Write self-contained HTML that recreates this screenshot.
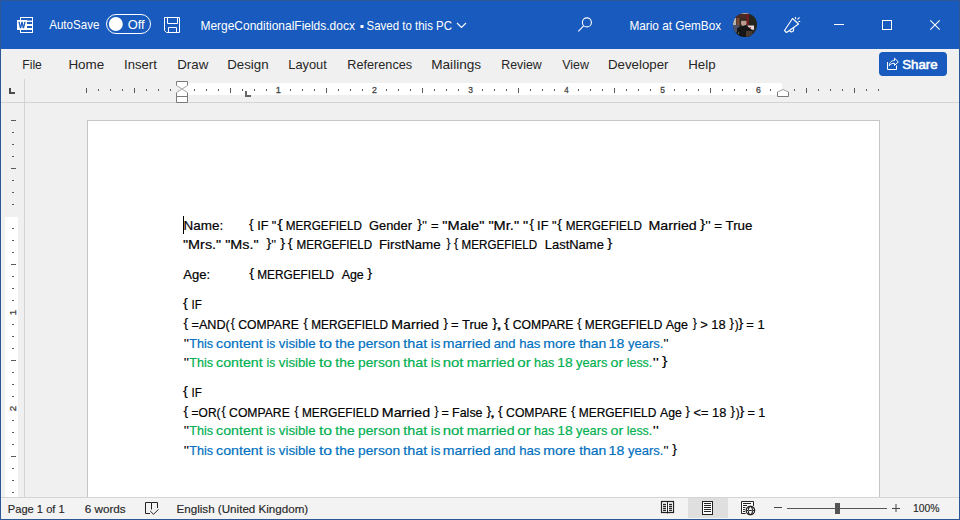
<!DOCTYPE html>
<html><head><meta charset="utf-8">
<style>
*{margin:0;padding:0}
html,body{width:960px;height:520px;overflow:hidden;background:#f0f0f0}
svg{position:absolute;left:0;top:0;display:block}
text{font-family:"Liberation Sans",sans-serif;white-space:pre}
</style></head><body>
<svg width="960" height="520" viewBox="0 0 960 520" xml:space="preserve">
<!-- backgrounds -->
<rect x="0" y="0" width="960" height="520" fill="#f0f0f0"/>
<rect x="0" y="0" width="960" height="49" fill="#185abd"/>
<!-- ruler -->
<rect x="24" y="79" width="1" height="418" fill="#d4d4d4"/>
<rect x="1" y="102" width="958" height="1" fill="#d4d4d4"/>
<rect x="183" y="83" width="599" height="12" fill="#ffffff"/>
<rect x="5" y="217" width="13" height="280" fill="#ffffff"/>
<!-- page -->
<rect x="87.5" y="120.5" width="792" height="400" fill="#ffffff" stroke="#c6c6c6" stroke-width="1"/>
<!-- RULER -->
<rect x="86" y="88" width="1" height="5" fill="#5a5a5a"/>
<rect x="98" y="89" width="1" height="2" fill="#5a5a5a"/>
<rect x="110" y="89" width="1" height="2" fill="#5a5a5a"/>
<rect x="122" y="89" width="1" height="2" fill="#5a5a5a"/>
<rect x="134" y="88" width="1" height="5" fill="#5a5a5a"/>
<rect x="146" y="89" width="1" height="2" fill="#5a5a5a"/>
<rect x="158" y="89" width="1" height="2" fill="#5a5a5a"/>
<rect x="170" y="89" width="1" height="2" fill="#5a5a5a"/>
<rect x="194" y="89" width="1" height="2" fill="#5a5a5a"/>
<rect x="206" y="89" width="1" height="2" fill="#5a5a5a"/>
<rect x="218" y="89" width="1" height="2" fill="#5a5a5a"/>
<rect x="230" y="88" width="1" height="5" fill="#5a5a5a"/>
<rect x="242" y="89" width="1" height="2" fill="#5a5a5a"/>
<rect x="254" y="89" width="1" height="2" fill="#5a5a5a"/>
<rect x="266" y="89" width="1" height="2" fill="#5a5a5a"/>
<rect x="290" y="89" width="1" height="2" fill="#5a5a5a"/>
<rect x="302" y="89" width="1" height="2" fill="#5a5a5a"/>
<rect x="314" y="89" width="1" height="2" fill="#5a5a5a"/>
<rect x="326" y="88" width="1" height="5" fill="#5a5a5a"/>
<rect x="338" y="89" width="1" height="2" fill="#5a5a5a"/>
<rect x="350" y="89" width="1" height="2" fill="#5a5a5a"/>
<rect x="362" y="89" width="1" height="2" fill="#5a5a5a"/>
<rect x="386" y="89" width="1" height="2" fill="#5a5a5a"/>
<rect x="398" y="89" width="1" height="2" fill="#5a5a5a"/>
<rect x="410" y="89" width="1" height="2" fill="#5a5a5a"/>
<rect x="422" y="88" width="1" height="5" fill="#5a5a5a"/>
<rect x="434" y="89" width="1" height="2" fill="#5a5a5a"/>
<rect x="446" y="89" width="1" height="2" fill="#5a5a5a"/>
<rect x="458" y="89" width="1" height="2" fill="#5a5a5a"/>
<rect x="482" y="89" width="1" height="2" fill="#5a5a5a"/>
<rect x="494" y="89" width="1" height="2" fill="#5a5a5a"/>
<rect x="506" y="89" width="1" height="2" fill="#5a5a5a"/>
<rect x="518" y="88" width="1" height="5" fill="#5a5a5a"/>
<rect x="530" y="89" width="1" height="2" fill="#5a5a5a"/>
<rect x="542" y="89" width="1" height="2" fill="#5a5a5a"/>
<rect x="554" y="89" width="1" height="2" fill="#5a5a5a"/>
<rect x="578" y="89" width="1" height="2" fill="#5a5a5a"/>
<rect x="590" y="89" width="1" height="2" fill="#5a5a5a"/>
<rect x="602" y="89" width="1" height="2" fill="#5a5a5a"/>
<rect x="614" y="88" width="1" height="5" fill="#5a5a5a"/>
<rect x="626" y="89" width="1" height="2" fill="#5a5a5a"/>
<rect x="638" y="89" width="1" height="2" fill="#5a5a5a"/>
<rect x="650" y="89" width="1" height="2" fill="#5a5a5a"/>
<rect x="674" y="89" width="1" height="2" fill="#5a5a5a"/>
<rect x="686" y="89" width="1" height="2" fill="#5a5a5a"/>
<rect x="698" y="89" width="1" height="2" fill="#5a5a5a"/>
<rect x="710" y="88" width="1" height="5" fill="#5a5a5a"/>
<rect x="722" y="89" width="1" height="2" fill="#5a5a5a"/>
<rect x="734" y="89" width="1" height="2" fill="#5a5a5a"/>
<rect x="746" y="89" width="1" height="2" fill="#5a5a5a"/>
<rect x="770" y="89" width="1" height="2" fill="#5a5a5a"/>
<rect x="794" y="89" width="1" height="2" fill="#5a5a5a"/>
<rect x="806" y="88" width="1" height="5" fill="#5a5a5a"/>
<rect x="818" y="89" width="1" height="2" fill="#5a5a5a"/>
<rect x="830" y="89" width="1" height="2" fill="#5a5a5a"/>
<rect x="842" y="89" width="1" height="2" fill="#5a5a5a"/>
<rect x="854" y="88" width="1" height="5" fill="#5a5a5a"/>
<rect x="866" y="89" width="1" height="2" fill="#5a5a5a"/>
<rect x="878" y="89" width="1" height="2" fill="#5a5a5a"/>
<rect x="11" y="120" width="5" height="1" fill="#5a5a5a"/>
<rect x="12" y="132" width="2" height="1" fill="#5a5a5a"/>
<rect x="12" y="144" width="2" height="1" fill="#5a5a5a"/>
<rect x="12" y="156" width="2" height="1" fill="#5a5a5a"/>
<rect x="11" y="168" width="5" height="1" fill="#5a5a5a"/>
<rect x="12" y="180" width="2" height="1" fill="#5a5a5a"/>
<rect x="12" y="192" width="2" height="1" fill="#5a5a5a"/>
<rect x="12" y="204" width="2" height="1" fill="#5a5a5a"/>
<rect x="12" y="228" width="2" height="1" fill="#5a5a5a"/>
<rect x="12" y="240" width="2" height="1" fill="#5a5a5a"/>
<rect x="12" y="252" width="2" height="1" fill="#5a5a5a"/>
<rect x="11" y="264" width="5" height="1" fill="#5a5a5a"/>
<rect x="12" y="276" width="2" height="1" fill="#5a5a5a"/>
<rect x="12" y="288" width="2" height="1" fill="#5a5a5a"/>
<rect x="12" y="300" width="2" height="1" fill="#5a5a5a"/>
<text transform="translate(16.2,312.5) rotate(-90)" x="0" y="0" font-size="9.8" fill="#444" stroke="#444" stroke-width="0.3" text-anchor="middle">1</text>
<rect x="12" y="324" width="2" height="1" fill="#5a5a5a"/>
<rect x="12" y="336" width="2" height="1" fill="#5a5a5a"/>
<rect x="12" y="348" width="2" height="1" fill="#5a5a5a"/>
<rect x="11" y="360" width="5" height="1" fill="#5a5a5a"/>
<rect x="12" y="372" width="2" height="1" fill="#5a5a5a"/>
<rect x="12" y="384" width="2" height="1" fill="#5a5a5a"/>
<rect x="12" y="396" width="2" height="1" fill="#5a5a5a"/>
<text transform="translate(16.2,408.5) rotate(-90)" x="0" y="0" font-size="9.8" fill="#444" stroke="#444" stroke-width="0.3" text-anchor="middle">2</text>
<rect x="12" y="420" width="2" height="1" fill="#5a5a5a"/>
<rect x="12" y="432" width="2" height="1" fill="#5a5a5a"/>
<rect x="12" y="444" width="2" height="1" fill="#5a5a5a"/>
<rect x="11" y="456" width="5" height="1" fill="#5a5a5a"/>
<rect x="12" y="468" width="2" height="1" fill="#5a5a5a"/>
<rect x="12" y="480" width="2" height="1" fill="#5a5a5a"/>
<rect x="12" y="492" width="2" height="1" fill="#5a5a5a"/>
<!-- status bar -->
<rect x="1" y="497" width="958" height="1" fill="#d4d4d4"/>
<rect x="1" y="498" width="958" height="21" fill="#f3f3f3"/>
<rect x="688" y="498" width="40" height="20" fill="#dfdfdf"/>
<!-- window border -->
<rect x="0" y="0" width="960" height="1" fill="#2c5694"/>
<rect x="0" y="0" width="1" height="520" fill="#2c5694"/>
<rect x="959" y="0" width="1" height="520" fill="#2c5694"/>
<rect x="0" y="519" width="960" height="1" fill="#2c5694"/>
<!-- ICONS -->
<!-- word icon -->
<rect x="20" y="17" width="13" height="16" fill="#fff"/>
<g fill="#185abd">
<rect x="21" y="18" width="11" height="2"/>
<rect x="27" y="20" width="5" height="0.6"/>
<rect x="27" y="22" width="5" height="2"/>
<rect x="27" y="26" width="5" height="2"/>
<rect x="21" y="30" width="11" height="2"/>
</g>
<rect x="17" y="20" width="10" height="10" fill="#fff"/>
<path d="M18.3,21.8 L19.9,28.2 L21.3,28.2 L22,24.8 L22.7,28.2 L24.1,28.2 L25.7,21.8 L24.3,21.8 L23.4,25.8 L22.7,21.8 L21.3,21.8 L20.6,25.8 L19.7,21.8 Z" fill="#185abd"/>
<!-- autosave toggle -->
<rect x="106.5" y="14.5" width="44" height="19" rx="9.5" fill="none" stroke="#fff" stroke-width="1"/>
<circle cx="115.8" cy="24" r="7" fill="#fff"/>
<!-- save icon -->
<g fill="none" stroke="#fff" stroke-width="1">
<path d="M164.5,17.5 H179.5 V32.5 H166.5 L164.5,30.5 Z"/>
<path d="M167.5,17.5 V23.5 H177.5 V17.5"/>
<path d="M168.5,32.5 V27.5 H176.5 V32.5"/>
</g>
<!-- bullet + chevron -->
<rect x="360.5" y="25" width="3" height="3" fill="#fff"/>
<path d="M457,23 L461.5,27.5 L466,23" fill="none" stroke="#fff" stroke-width="1.1"/>
<!-- search -->
<g fill="none" stroke="#fff" stroke-width="1.1">
<circle cx="586.9" cy="22.4" r="4.5"/>
<path d="M583.6,25.8 L578.3,31.3"/>
</g>
<!-- avatar -->
<defs>
<clipPath id="av"><circle cx="745" cy="25" r="12"/></clipPath>
<filter id="bl" x="-10%" y="-10%" width="120%" height="120%"><feGaussianBlur stdDeviation="0.8"/></filter>
</defs>
<g clip-path="url(#av)">
<g>
<rect x="731" y="11" width="28" height="28" fill="#2e2a26"/>
<rect x="731" y="11" width="28" height="3" fill="#b8b0a8"/>
<rect x="735" y="14" width="12" height="4" fill="#4a2a22"/>
<rect x="746" y="14" width="3" height="11" fill="#6a1c22"/>
<rect x="749" y="15" width="8" height="12" fill="#25271f"/>
<rect x="732" y="18" width="4" height="7" fill="#b8b4b0"/>
<rect x="736.5" y="18" width="3" height="8" fill="#7a4a32"/>
<rect x="732" y="25" width="7" height="7" fill="#4c5268"/>
<ellipse cx="743.8" cy="22.8" rx="2.8" ry="3.2" fill="#b89c8c"/>
<rect x="741" y="19" width="5.5" height="1.8" fill="#3a2a22"/>
<rect x="747.5" y="25.5" width="6.5" height="4.2" fill="#e6dcdc"/>
<rect x="749.5" y="27" width="1.5" height="1.5" fill="#c04040"/>
<path d="M737,28 L746,25 L752,30 L752,39 L737,39 Z" fill="#161616"/>
<rect x="746" y="31" width="6" height="6" fill="#4a3c30"/>
<circle cx="738.5" cy="33" r="0.6" fill="#d8c880"/>
</g>
</g>
<!-- megaphone -->
<g fill="none" stroke="#fff" stroke-width="1.1" stroke-linejoin="round">
<path d="M784.5,30.5 L792.5,18.5 L798.5,24 L786.5,32.5 Z"/>
<path d="M789.6,30.8 Q790.8,32.4 792.6,31.6 Q794,30.8 793.7,28"/>
<path d="M795.3,17 L795.8,19"/>
<path d="M797.5,19.5 L799.5,17.3"/>
<path d="M798.3,21.5 L800.2,21.5"/>
</g>
<!-- min max close -->
<rect x="834" y="24" width="10" height="1" fill="#fff"/>
<rect x="882.5" y="20.5" width="9" height="9" fill="none" stroke="#fff" stroke-width="1"/>
<path d="M930.3,20.3 L939.7,29.7 M939.7,20.3 L930.3,29.7" stroke="#fff" stroke-width="1.1"/>
<!-- share button -->
<rect x="879" y="52" width="68" height="24" rx="4" fill="#185abd"/>
<g fill="none" stroke="#fff" stroke-width="1">
<path d="M887.5,62 V69.5 H896.5 V65.5"/>
<path d="M889.2,65.8 C889.6,62 891.8,60.5 894.5,60.5 V58.2 L898.3,61.9 L894.5,65.4 V63.3 C892.4,63.1 890.6,64 889.2,65.8 Z"/>
</g>
<!-- ruler tab selector -->
<rect x="9" y="88" width="2" height="6" fill="#4a4a4a"/><rect x="9" y="92" width="6" height="2" fill="#4a4a4a"/>
<!-- indent markers -->
<g fill="#fff" stroke="#7a7a7a" stroke-width="1">
<path d="M176.5,81.5 H187.5 V85.5 L182,89 L176.5,85.5 Z" stroke="none"/>
<path d="M182,89 L187.5,92.5 V96.5 H176.5 V92.5 Z" stroke="none"/>
<path d="M176.5,85.5 V81.5 H187.5 V85.5 M176.5,92.5 V102.5 H187.5 V92.5 M176.5,96.5 H187.5"/>
<path d="M176.5,85.5 L187.5,92.5 M187.5,85.5 L176.5,92.5" stroke="#a8a8a8"/>
<path d="M777.5,96.5 V92 L783,89.5 L788.5,92 V96.5 Z" stroke="none"/><path d="M777.5,92 V96.5 H788.5 V92"/><path d="M777.5,92 L783,89.5 L788.5,92" stroke="#a0a0a0"/>
</g>
<!-- tab stop L -->
<rect x="245" y="91" width="2" height="6" fill="#666"/><rect x="245" y="95" width="6" height="2" fill="#666"/>
<!-- cursor -->
<rect x="183" y="216" width="1" height="18" fill="#000"/>
<!-- status icons -->
<g fill="none" stroke="#222" stroke-width="1">
<path d="M150,513.5 H145.5 V502.5 H151.5 V509.5 M151.5,502.5 H157.5 V508"/>
<path d="M150.2,511 L153.5,514.3 L158.5,509.3"/>
</g>
<g>
<rect x="661.5" y="501.5" width="12" height="11" fill="#fff" stroke="#222" stroke-width="1.2"/>
<rect x="667" y="501.5" width="1" height="12" fill="#222"/>
<g fill="#222"><rect x="663" y="503.8" width="3" height="1.3"/><rect x="663" y="505.8" width="3" height="1.3"/><rect x="663" y="507.8" width="3" height="1.3"/><rect x="663" y="509.8" width="3" height="1.3"/>
<rect x="669" y="503.8" width="3" height="1.3"/><rect x="669" y="505.8" width="3" height="1.3"/><rect x="669" y="507.8" width="3" height="1.3"/><rect x="669" y="509.8" width="3" height="1.3"/></g>
</g>
<g>
<rect x="702.5" y="501.5" width="10" height="13" fill="#fff" stroke="#222" stroke-width="1"/>
<g fill="#222"><rect x="704" y="503" width="7" height="1"/><rect x="704" y="505" width="7" height="1"/><rect x="704" y="507" width="7" height="1"/><rect x="704" y="509" width="7" height="1"/><rect x="704" y="511" width="7" height="1"/></g>
</g>
<g>
<path d="M750,513.5 H741.5 V501.5 H753.5 V506" fill="#fff" stroke="#222" stroke-width="1"/>
<g fill="#222"><rect x="743" y="503" width="8" height="1"/><rect x="743" y="505" width="4" height="1"/><rect x="743" y="507" width="2.5" height="1"/><rect x="743" y="509" width="2.5" height="1"/><rect x="743" y="511" width="2.5" height="1"/></g>
<circle cx="750.4" cy="510.5" r="5.6" fill="#f3f3f3"/>
<circle cx="750.4" cy="510.5" r="4.2" fill="#fff" stroke="#222" stroke-width="1.3"/>
<ellipse cx="750.4" cy="510.5" rx="2" ry="4.2" fill="none" stroke="#222" stroke-width="1.2"/>
<rect x="746.5" y="510" width="8" height="1" fill="#222"/>
<rect x="748.6" y="509.7" width="3.6" height="1.6" fill="#fff"/>
<rect x="749" y="510" width="2.8" height="1" fill="#222"/>
</g>
<!-- zoom slider -->
<rect x="774" y="507" width="8" height="1" fill="#444"/>
<rect x="787" y="508" width="100" height="1" fill="#555"/>
<rect x="835" y="503" width="5" height="11" fill="#555"/>
<rect x="892" y="508" width="8" height="1" fill="#444"/>
<rect x="895.5" y="504" width="1" height="8" fill="#444"/>

<!-- TEXTS -->
<text x="49.18" y="28.70" font-size="12.70" textLength="50.34" lengthAdjust="spacingAndGlyphs" fill="#ffffff">AutoSave</text>
<text x="127.70" y="28.70" font-size="12.70" textLength="16.98" lengthAdjust="spacingAndGlyphs" fill="#ffffff">Off</text>
<text x="200.42" y="29.70" font-size="12.70" textLength="154.51" lengthAdjust="spacingAndGlyphs" fill="#ffffff">MergeConditionalFields.docx</text>
<text x="366.48" y="29.70" font-size="12.70" textLength="85.56" lengthAdjust="spacingAndGlyphs" fill="#ffffff">Saved to this PC</text>
<text x="629.43" y="30.00" font-size="12.70" textLength="91.69" lengthAdjust="spacingAndGlyphs" fill="#ffffff">Mario at GemBox</text>
<text x="22.31" y="68.80" font-size="13.40" textLength="19.53" lengthAdjust="spacingAndGlyphs" fill="#262626">File</text>
<text x="68.40" y="68.80" font-size="13.40" textLength="35.90" lengthAdjust="spacingAndGlyphs" fill="#262626">Home</text>
<text x="124.09" y="68.80" font-size="13.40" textLength="32.70" lengthAdjust="spacingAndGlyphs" fill="#262626">Insert</text>
<text x="177.21" y="68.80" font-size="13.40" textLength="31.06" lengthAdjust="spacingAndGlyphs" fill="#262626">Draw</text>
<text x="227.21" y="68.80" font-size="13.40" textLength="41.35" lengthAdjust="spacingAndGlyphs" fill="#262626">Design</text>
<text x="288.25" y="68.80" font-size="13.40" textLength="38.55" lengthAdjust="spacingAndGlyphs" fill="#262626">Layout</text>
<text x="347.26" y="68.80" font-size="13.40" textLength="64.90" lengthAdjust="spacingAndGlyphs" fill="#262626">References</text>
<text x="431.18" y="68.80" font-size="13.40" textLength="50.01" lengthAdjust="spacingAndGlyphs" fill="#262626">Mailings</text>
<text x="501.29" y="68.80" font-size="13.40" textLength="40.38" lengthAdjust="spacingAndGlyphs" fill="#262626">Review</text>
<text x="562.25" y="68.80" font-size="13.40" textLength="26.72" lengthAdjust="spacingAndGlyphs" fill="#262626">View</text>
<text x="607.91" y="68.80" font-size="13.40" textLength="60.61" lengthAdjust="spacingAndGlyphs" fill="#262626">Developer</text>
<text x="688.21" y="68.80" font-size="13.40" textLength="27.35" lengthAdjust="spacingAndGlyphs" fill="#262626">Help</text>
<text x="902.20" y="68.90" font-size="13.40" textLength="35.39" lengthAdjust="spacingAndGlyphs" fill="#ffffff" stroke="#fff" stroke-width="0.55">Share</text>
<text x="7.79" y="512.50" font-size="11.80" textLength="56.96" lengthAdjust="spacingAndGlyphs" fill="#262626" stroke="#262626" stroke-width="0.15">Page 1 of 1</text>
<text x="84.71" y="512.50" font-size="11.80" textLength="41.02" lengthAdjust="spacingAndGlyphs" fill="#262626" stroke="#262626" stroke-width="0.15">6 words</text>
<text x="176.55" y="512.50" font-size="11.80" textLength="131.67" lengthAdjust="spacingAndGlyphs" fill="#262626" stroke="#262626" stroke-width="0.15">English (United Kingdom)</text>
<text x="913.01" y="512.20" font-size="11.80" textLength="26.56" lengthAdjust="spacingAndGlyphs" fill="#262626" stroke="#262626" stroke-width="0.15">100%</text>
<text x="183.50" y="229.80" font-size="13.60" textLength="39.63" lengthAdjust="spacingAndGlyphs" fill="#000000" stroke="#000000" stroke-width="0.2">Name:</text>
<text x="248.97" y="227.80" font-size="13.50" textLength="4.57" lengthAdjust="spacingAndGlyphs" fill="#000000" stroke="#000000" stroke-width="0.15">{</text>
<text x="257.14" y="229.80" font-size="13.60" textLength="19.20" lengthAdjust="spacingAndGlyphs" fill="#000000" stroke="#000000" stroke-width="0.2">IF "</text>
<text x="277.22" y="227.80" font-size="13.50" textLength="5.57" lengthAdjust="spacingAndGlyphs" fill="#000000" stroke="#000000" stroke-width="0.15">{</text>
<text x="285.74" y="229.80" font-size="13.60" textLength="76.12" lengthAdjust="spacingAndGlyphs" fill="#000000" stroke="#000000" stroke-width="0.2">MERGEFIELD</text>
<text x="369.05" y="229.80" font-size="13.60" textLength="42.86" lengthAdjust="spacingAndGlyphs" fill="#000000" stroke="#000000" stroke-width="0.2">Gender</text>
<text x="417.27" y="227.80" font-size="13.50" textLength="4.69" lengthAdjust="spacingAndGlyphs" fill="#000000" stroke="#000000" stroke-width="0.15">}</text>
<text x="421.90" y="229.80" font-size="13.60" textLength="5.00" lengthAdjust="spacingAndGlyphs" fill="#000000">"</text>
<text x="431.07" y="229.80" font-size="13.60" textLength="7.57" lengthAdjust="spacingAndGlyphs" fill="#000000" stroke="#000000" stroke-width="0.2">=</text>
<text x="442.39" y="229.80" font-size="13.60" textLength="85.93" lengthAdjust="spacingAndGlyphs" fill="#000000" stroke="#000000" stroke-width="0.2">"Male" "Mr." "</text>
<text x="529.48" y="227.80" font-size="13.50" textLength="4.46" lengthAdjust="spacingAndGlyphs" fill="#000000" stroke="#000000" stroke-width="0.15">{</text>
<text x="537.12" y="229.80" font-size="13.60" textLength="19.42" lengthAdjust="spacingAndGlyphs" fill="#000000" stroke="#000000" stroke-width="0.2">IF "</text>
<text x="557.27" y="227.80" font-size="13.50" textLength="4.68" lengthAdjust="spacingAndGlyphs" fill="#000000" stroke="#000000" stroke-width="0.15">{</text>
<text x="565.74" y="229.80" font-size="13.60" textLength="76.12" lengthAdjust="spacingAndGlyphs" fill="#000000" stroke="#000000" stroke-width="0.2">MERGEFIELD</text>
<text x="648.53" y="229.80" font-size="13.60" textLength="48.18" lengthAdjust="spacingAndGlyphs" fill="#000000" stroke="#000000" stroke-width="0.2">Married</text>
<text x="700.04" y="227.80" font-size="13.50" textLength="5.24" lengthAdjust="spacingAndGlyphs" fill="#000000" stroke="#000000" stroke-width="0.15">}</text>
<text x="705.34" y="229.80" font-size="13.60" textLength="5.52" lengthAdjust="spacingAndGlyphs" fill="#000000">"</text>
<text x="714.26" y="229.80" font-size="13.60" textLength="38.22" lengthAdjust="spacingAndGlyphs" fill="#000000" stroke="#000000" stroke-width="0.2">= True</text>
<text x="182.99" y="249.10" font-size="13.60" textLength="75.62" lengthAdjust="spacingAndGlyphs" fill="#000000" stroke="#000000" stroke-width="0.2">"Mrs." "Ms."</text>
<text x="266.56" y="247.10" font-size="13.50" textLength="4.80" lengthAdjust="spacingAndGlyphs" fill="#000000" stroke="#000000" stroke-width="0.15">}</text>
<text x="271.22" y="249.10" font-size="13.60" textLength="4.86" lengthAdjust="spacingAndGlyphs" fill="#000000">"</text>
<text x="280.26" y="247.10" font-size="13.50" textLength="4.91" lengthAdjust="spacingAndGlyphs" fill="#000000" stroke="#000000" stroke-width="0.15">}</text>
<text x="287.76" y="247.10" font-size="13.50" textLength="4.90" lengthAdjust="spacingAndGlyphs" fill="#000000" stroke="#000000" stroke-width="0.15">{</text>
<text x="296.54" y="249.10" font-size="13.60" textLength="75.71" lengthAdjust="spacingAndGlyphs" fill="#000000" stroke="#000000" stroke-width="0.2">MERGEFIELD</text>
<text x="378.90" y="249.10" font-size="13.60" textLength="61.69" lengthAdjust="spacingAndGlyphs" fill="#000000" stroke="#000000" stroke-width="0.2">FirstName</text>
<text x="446.50" y="247.10" font-size="13.50" textLength="4.02" lengthAdjust="spacingAndGlyphs" fill="#000000" stroke="#000000" stroke-width="0.15">}</text>
<text x="453.99" y="247.10" font-size="13.50" textLength="4.23" lengthAdjust="spacingAndGlyphs" fill="#000000" stroke="#000000" stroke-width="0.15">{</text>
<text x="461.54" y="249.10" font-size="13.60" textLength="75.71" lengthAdjust="spacingAndGlyphs" fill="#000000" stroke="#000000" stroke-width="0.2">MERGEFIELD</text>
<text x="544.74" y="249.10" font-size="13.60" textLength="59.14" lengthAdjust="spacingAndGlyphs" fill="#000000" stroke="#000000" stroke-width="0.2">LastName</text>
<text x="607.25" y="247.10" font-size="13.50" textLength="5.02" lengthAdjust="spacingAndGlyphs" fill="#000000" stroke="#000000" stroke-width="0.15">}</text>
<text x="183.27" y="279.10" font-size="13.60" textLength="26.82" lengthAdjust="spacingAndGlyphs" fill="#000000" stroke="#000000" stroke-width="0.2">Age:</text>
<text x="249.16" y="277.10" font-size="13.50" textLength="4.90" lengthAdjust="spacingAndGlyphs" fill="#000000" stroke="#000000" stroke-width="0.15">{</text>
<text x="257.23" y="279.10" font-size="13.60" textLength="76.94" lengthAdjust="spacingAndGlyphs" fill="#000000" stroke="#000000" stroke-width="0.2">MERGEFIELD</text>
<text x="341.68" y="279.10" font-size="13.60" textLength="22.08" lengthAdjust="spacingAndGlyphs" fill="#000000" stroke="#000000" stroke-width="0.2">Age</text>
<text x="367.36" y="277.10" font-size="13.50" textLength="4.91" lengthAdjust="spacingAndGlyphs" fill="#000000" stroke="#000000" stroke-width="0.15">}</text>
<text x="183.06" y="307.30" font-size="13.50" textLength="4.90" lengthAdjust="spacingAndGlyphs" fill="#000000" stroke="#000000" stroke-width="0.15">{</text>
<text x="191.43" y="309.30" font-size="13.60" textLength="10.34" lengthAdjust="spacingAndGlyphs" fill="#000000" stroke="#000000" stroke-width="0.2">IF</text>
<text x="183.57" y="326.80" font-size="13.50" textLength="4.68" lengthAdjust="spacingAndGlyphs" fill="#000000" stroke="#000000" stroke-width="0.15">{</text>
<text x="191.58" y="328.80" font-size="13.60" textLength="38.19" lengthAdjust="spacingAndGlyphs" fill="#000000" stroke="#000000" stroke-width="0.2">=AND(</text>
<text x="230.80" y="326.80" font-size="13.50" textLength="4.12" lengthAdjust="spacingAndGlyphs" fill="#000000" stroke="#000000" stroke-width="0.15">{</text>
<text x="238.19" y="328.80" font-size="13.60" textLength="60.62" lengthAdjust="spacingAndGlyphs" fill="#000000" stroke="#000000" stroke-width="0.2">COMPARE</text>
<text x="303.58" y="326.80" font-size="13.50" textLength="4.34" lengthAdjust="spacingAndGlyphs" fill="#000000" stroke="#000000" stroke-width="0.15">{</text>
<text x="311.23" y="328.80" font-size="13.60" textLength="76.84" lengthAdjust="spacingAndGlyphs" fill="#000000" stroke="#000000" stroke-width="0.2">MERGEFIELD</text>
<text x="391.34" y="328.80" font-size="13.60" textLength="47.87" lengthAdjust="spacingAndGlyphs" fill="#000000" stroke="#000000" stroke-width="0.2">Married</text>
<text x="443.48" y="326.80" font-size="13.50" textLength="4.46" lengthAdjust="spacingAndGlyphs" fill="#000000" stroke="#000000" stroke-width="0.15">}</text>
<text x="451.08" y="328.80" font-size="13.60" textLength="36.98" lengthAdjust="spacingAndGlyphs" fill="#000000" stroke="#000000" stroke-width="0.2">= True</text>
<text x="492.24" y="326.80" font-size="13.50" textLength="5.13" lengthAdjust="spacingAndGlyphs" fill="#000000" stroke="#000000" stroke-width="0.15">}</text>
<text x="495.79" y="328.80" font-size="13.60" textLength="6.51" lengthAdjust="spacingAndGlyphs" fill="#000000" stroke="#000000" stroke-width="0.2">,</text>
<text x="503.93" y="326.80" font-size="13.50" textLength="5.35" lengthAdjust="spacingAndGlyphs" fill="#000000" stroke="#000000" stroke-width="0.15">{</text>
<text x="512.69" y="328.80" font-size="13.60" textLength="60.83" lengthAdjust="spacingAndGlyphs" fill="#000000" stroke="#000000" stroke-width="0.2">COMPARE</text>
<text x="577.29" y="326.80" font-size="13.50" textLength="4.23" lengthAdjust="spacingAndGlyphs" fill="#000000" stroke="#000000" stroke-width="0.15">{</text>
<text x="584.82" y="328.80" font-size="13.60" textLength="77.45" lengthAdjust="spacingAndGlyphs" fill="#000000" stroke="#000000" stroke-width="0.2">MERGEFIELD</text>
<text x="665.78" y="328.80" font-size="13.60" textLength="22.28" lengthAdjust="spacingAndGlyphs" fill="#000000" stroke="#000000" stroke-width="0.2">Age</text>
<text x="692.79" y="326.80" font-size="13.50" textLength="4.13" lengthAdjust="spacingAndGlyphs" fill="#000000" stroke="#000000" stroke-width="0.15">}</text>
<text x="700.17" y="328.80" font-size="13.60" textLength="25.39" lengthAdjust="spacingAndGlyphs" fill="#000000" stroke="#000000" stroke-width="0.2">&gt; 18</text>
<text x="729.48" y="326.80" font-size="13.50" textLength="4.46" lengthAdjust="spacingAndGlyphs" fill="#000000" stroke="#000000" stroke-width="0.15">}</text>
<text x="734.63" y="328.80" font-size="13.60" textLength="3.89" lengthAdjust="spacingAndGlyphs" fill="#000000" stroke="#000000" stroke-width="0.2">)</text>
<text x="738.24" y="326.80" font-size="13.50" textLength="5.13" lengthAdjust="spacingAndGlyphs" fill="#000000" stroke="#000000" stroke-width="0.15">}</text>
<text x="746.27" y="328.80" font-size="13.60" textLength="18.36" lengthAdjust="spacingAndGlyphs" fill="#000000" stroke="#000000" stroke-width="0.2">= 1</text>
<text x="183.67" y="348.20" font-size="13.60" textLength="5.26" lengthAdjust="spacingAndGlyphs" fill="#000000">"</text>
<text x="189.22" y="348.20" font-size="13.60" textLength="23.84" lengthAdjust="spacingAndGlyphs" fill="#0070c0" stroke="#0070c0" stroke-width="0.2">This</text>
<text x="216.10" y="348.20" font-size="13.60" textLength="46.61" lengthAdjust="spacingAndGlyphs" fill="#0070c0" stroke="#0070c0" stroke-width="0.2">content</text>
<text x="266.50" y="348.20" font-size="13.60" textLength="8.63" lengthAdjust="spacingAndGlyphs" fill="#0070c0" stroke="#0070c0" stroke-width="0.2">is</text>
<text x="278.85" y="348.20" font-size="13.60" textLength="36.73" lengthAdjust="spacingAndGlyphs" fill="#0070c0" stroke="#0070c0" stroke-width="0.2">visible</text>
<text x="318.96" y="348.20" font-size="13.60" textLength="13.10" lengthAdjust="spacingAndGlyphs" fill="#0070c0" stroke="#0070c0" stroke-width="0.2">to</text>
<text x="335.39" y="348.20" font-size="13.60" textLength="19.22" lengthAdjust="spacingAndGlyphs" fill="#0070c0" stroke="#0070c0" stroke-width="0.2">the</text>
<text x="358.01" y="348.20" font-size="13.60" textLength="42.08" lengthAdjust="spacingAndGlyphs" fill="#0070c0" stroke="#0070c0" stroke-width="0.2">person</text>
<text x="403.18" y="348.20" font-size="13.60" textLength="24.02" lengthAdjust="spacingAndGlyphs" fill="#0070c0" stroke="#0070c0" stroke-width="0.2">that</text>
<text x="430.71" y="348.20" font-size="13.60" textLength="9.56" lengthAdjust="spacingAndGlyphs" fill="#0070c0" stroke="#0070c0" stroke-width="0.2">is</text>
<text x="442.76" y="348.20" font-size="13.60" textLength="47.85" lengthAdjust="spacingAndGlyphs" fill="#0070c0" stroke="#0070c0" stroke-width="0.2">married</text>
<text x="493.85" y="348.20" font-size="13.60" textLength="21.69" lengthAdjust="spacingAndGlyphs" fill="#0070c0" stroke="#0070c0" stroke-width="0.2">and</text>
<text x="519.18" y="348.20" font-size="13.60" textLength="21.29" lengthAdjust="spacingAndGlyphs" fill="#0070c0" stroke="#0070c0" stroke-width="0.2">has</text>
<text x="543.27" y="348.20" font-size="13.60" textLength="32.06" lengthAdjust="spacingAndGlyphs" fill="#0070c0" stroke="#0070c0" stroke-width="0.2">more</text>
<text x="579.19" y="348.20" font-size="13.60" textLength="27.22" lengthAdjust="spacingAndGlyphs" fill="#0070c0" stroke="#0070c0" stroke-width="0.2">than</text>
<text x="608.63" y="348.20" font-size="13.60" textLength="15.69" lengthAdjust="spacingAndGlyphs" fill="#0070c0" stroke="#0070c0" stroke-width="0.2">18</text>
<text x="627.97" y="348.20" font-size="13.60" textLength="35.42" lengthAdjust="spacingAndGlyphs" fill="#0070c0" stroke="#0070c0" stroke-width="0.2">years.</text>
<text x="663.40" y="348.20" font-size="13.60" textLength="5.00" lengthAdjust="spacingAndGlyphs" fill="#000000">"</text>
<text x="183.67" y="366.90" font-size="13.60" textLength="5.26" lengthAdjust="spacingAndGlyphs" fill="#000000">"</text>
<text x="189.22" y="366.90" font-size="13.60" textLength="23.84" lengthAdjust="spacingAndGlyphs" fill="#00b050" stroke="#00b050" stroke-width="0.2">This</text>
<text x="216.10" y="366.90" font-size="13.60" textLength="46.61" lengthAdjust="spacingAndGlyphs" fill="#00b050" stroke="#00b050" stroke-width="0.2">content</text>
<text x="266.50" y="366.90" font-size="13.60" textLength="8.63" lengthAdjust="spacingAndGlyphs" fill="#00b050" stroke="#00b050" stroke-width="0.2">is</text>
<text x="278.85" y="366.90" font-size="13.60" textLength="36.73" lengthAdjust="spacingAndGlyphs" fill="#00b050" stroke="#00b050" stroke-width="0.2">visible</text>
<text x="318.96" y="366.90" font-size="13.60" textLength="13.10" lengthAdjust="spacingAndGlyphs" fill="#00b050" stroke="#00b050" stroke-width="0.2">to</text>
<text x="335.39" y="366.90" font-size="13.60" textLength="19.22" lengthAdjust="spacingAndGlyphs" fill="#00b050" stroke="#00b050" stroke-width="0.2">the</text>
<text x="358.01" y="366.90" font-size="13.60" textLength="42.08" lengthAdjust="spacingAndGlyphs" fill="#00b050" stroke="#00b050" stroke-width="0.2">person</text>
<text x="403.18" y="366.90" font-size="13.60" textLength="24.02" lengthAdjust="spacingAndGlyphs" fill="#00b050" stroke="#00b050" stroke-width="0.2">that</text>
<text x="430.71" y="366.90" font-size="13.60" textLength="9.56" lengthAdjust="spacingAndGlyphs" fill="#00b050" stroke="#00b050" stroke-width="0.2">is</text>
<text x="442.71" y="366.90" font-size="13.60" textLength="20.80" lengthAdjust="spacingAndGlyphs" fill="#00b050" stroke="#00b050" stroke-width="0.2">not</text>
<text x="466.66" y="366.90" font-size="13.60" textLength="47.85" lengthAdjust="spacingAndGlyphs" fill="#00b050" stroke="#00b050" stroke-width="0.2">married</text>
<text x="517.27" y="366.90" font-size="13.60" textLength="13.38" lengthAdjust="spacingAndGlyphs" fill="#00b050" stroke="#00b050" stroke-width="0.2">or</text>
<text x="533.93" y="366.90" font-size="13.60" textLength="20.28" lengthAdjust="spacingAndGlyphs" fill="#00b050" stroke="#00b050" stroke-width="0.2">has</text>
<text x="557.24" y="366.90" font-size="13.60" textLength="15.46" lengthAdjust="spacingAndGlyphs" fill="#00b050" stroke="#00b050" stroke-width="0.2">18</text>
<text x="576.07" y="366.90" font-size="13.60" textLength="31.40" lengthAdjust="spacingAndGlyphs" fill="#00b050" stroke="#00b050" stroke-width="0.2">years</text>
<text x="610.60" y="366.90" font-size="13.60" textLength="12.63" lengthAdjust="spacingAndGlyphs" fill="#00b050" stroke="#00b050" stroke-width="0.2">or</text>
<text x="626.77" y="366.90" font-size="13.60" textLength="25.47" lengthAdjust="spacingAndGlyphs" fill="#00b050" stroke="#00b050" stroke-width="0.2">less.</text>
<text x="652.66" y="366.90" font-size="13.60" textLength="6.18" lengthAdjust="spacingAndGlyphs" fill="#000000">"</text>
<text x="661.93" y="364.90" font-size="13.50" textLength="5.47" lengthAdjust="spacingAndGlyphs" fill="#000000" stroke="#000000" stroke-width="0.15">}</text>
<text x="183.06" y="395.30" font-size="13.50" textLength="4.90" lengthAdjust="spacingAndGlyphs" fill="#000000" stroke="#000000" stroke-width="0.15">{</text>
<text x="191.43" y="397.30" font-size="13.60" textLength="10.34" lengthAdjust="spacingAndGlyphs" fill="#000000" stroke="#000000" stroke-width="0.2">IF</text>
<text x="183.57" y="414.90" font-size="13.50" textLength="4.68" lengthAdjust="spacingAndGlyphs" fill="#000000" stroke="#000000" stroke-width="0.15">{</text>
<text x="191.62" y="416.90" font-size="13.60" textLength="28.96" lengthAdjust="spacingAndGlyphs" fill="#000000" stroke="#000000" stroke-width="0.2">=OR(</text>
<text x="221.49" y="414.90" font-size="13.50" textLength="4.23" lengthAdjust="spacingAndGlyphs" fill="#000000" stroke="#000000" stroke-width="0.15">{</text>
<text x="229.09" y="416.90" font-size="13.60" textLength="60.73" lengthAdjust="spacingAndGlyphs" fill="#000000" stroke="#000000" stroke-width="0.2">COMPARE</text>
<text x="294.50" y="414.90" font-size="13.50" textLength="4.01" lengthAdjust="spacingAndGlyphs" fill="#000000" stroke="#000000" stroke-width="0.15">{</text>
<text x="302.03" y="416.90" font-size="13.60" textLength="76.84" lengthAdjust="spacingAndGlyphs" fill="#000000" stroke="#000000" stroke-width="0.2">MERGEFIELD</text>
<text x="381.83" y="416.90" font-size="13.60" textLength="48.29" lengthAdjust="spacingAndGlyphs" fill="#000000" stroke="#000000" stroke-width="0.2">Married</text>
<text x="434.50" y="414.90" font-size="13.50" textLength="4.02" lengthAdjust="spacingAndGlyphs" fill="#000000" stroke="#000000" stroke-width="0.15">}</text>
<text x="441.39" y="416.90" font-size="13.60" textLength="41.16" lengthAdjust="spacingAndGlyphs" fill="#000000" stroke="#000000" stroke-width="0.2">= False</text>
<text x="486.46" y="414.90" font-size="13.50" textLength="4.80" lengthAdjust="spacingAndGlyphs" fill="#000000" stroke="#000000" stroke-width="0.15">}</text>
<text x="489.58" y="416.90" font-size="13.60" textLength="5.94" lengthAdjust="spacingAndGlyphs" fill="#000000" stroke="#000000" stroke-width="0.2">,</text>
<text x="498.07" y="414.90" font-size="13.50" textLength="4.68" lengthAdjust="spacingAndGlyphs" fill="#000000" stroke="#000000" stroke-width="0.15">{</text>
<text x="506.09" y="416.90" font-size="13.60" textLength="60.73" lengthAdjust="spacingAndGlyphs" fill="#000000" stroke="#000000" stroke-width="0.2">COMPARE</text>
<text x="571.08" y="414.90" font-size="13.50" textLength="4.46" lengthAdjust="spacingAndGlyphs" fill="#000000" stroke="#000000" stroke-width="0.15">{</text>
<text x="578.72" y="416.90" font-size="13.60" textLength="77.65" lengthAdjust="spacingAndGlyphs" fill="#000000" stroke="#000000" stroke-width="0.2">MERGEFIELD</text>
<text x="659.98" y="416.90" font-size="13.60" textLength="21.87" lengthAdjust="spacingAndGlyphs" fill="#000000" stroke="#000000" stroke-width="0.2">Age</text>
<text x="685.58" y="414.90" font-size="13.50" textLength="4.35" lengthAdjust="spacingAndGlyphs" fill="#000000" stroke="#000000" stroke-width="0.15">}</text>
<text x="693.57" y="416.90" font-size="13.60" textLength="32.79" lengthAdjust="spacingAndGlyphs" fill="#000000" stroke="#000000" stroke-width="0.2">&lt;= 18</text>
<text x="730.58" y="414.90" font-size="13.50" textLength="4.46" lengthAdjust="spacingAndGlyphs" fill="#000000" stroke="#000000" stroke-width="0.15">}</text>
<text x="735.73" y="416.90" font-size="13.60" textLength="3.89" lengthAdjust="spacingAndGlyphs" fill="#000000" stroke="#000000" stroke-width="0.2">)</text>
<text x="739.34" y="414.90" font-size="13.50" textLength="5.13" lengthAdjust="spacingAndGlyphs" fill="#000000" stroke="#000000" stroke-width="0.15">}</text>
<text x="747.38" y="416.90" font-size="13.60" textLength="17.94" lengthAdjust="spacingAndGlyphs" fill="#000000" stroke="#000000" stroke-width="0.2">= 1</text>
<text x="183.67" y="435.30" font-size="13.60" textLength="5.26" lengthAdjust="spacingAndGlyphs" fill="#000000">"</text>
<text x="189.22" y="435.30" font-size="13.60" textLength="23.84" lengthAdjust="spacingAndGlyphs" fill="#00b050" stroke="#00b050" stroke-width="0.2">This</text>
<text x="216.10" y="435.30" font-size="13.60" textLength="46.61" lengthAdjust="spacingAndGlyphs" fill="#00b050" stroke="#00b050" stroke-width="0.2">content</text>
<text x="266.50" y="435.30" font-size="13.60" textLength="8.63" lengthAdjust="spacingAndGlyphs" fill="#00b050" stroke="#00b050" stroke-width="0.2">is</text>
<text x="278.85" y="435.30" font-size="13.60" textLength="36.73" lengthAdjust="spacingAndGlyphs" fill="#00b050" stroke="#00b050" stroke-width="0.2">visible</text>
<text x="318.96" y="435.30" font-size="13.60" textLength="13.10" lengthAdjust="spacingAndGlyphs" fill="#00b050" stroke="#00b050" stroke-width="0.2">to</text>
<text x="335.39" y="435.30" font-size="13.60" textLength="19.22" lengthAdjust="spacingAndGlyphs" fill="#00b050" stroke="#00b050" stroke-width="0.2">the</text>
<text x="358.01" y="435.30" font-size="13.60" textLength="42.08" lengthAdjust="spacingAndGlyphs" fill="#00b050" stroke="#00b050" stroke-width="0.2">person</text>
<text x="403.18" y="435.30" font-size="13.60" textLength="24.02" lengthAdjust="spacingAndGlyphs" fill="#00b050" stroke="#00b050" stroke-width="0.2">that</text>
<text x="430.71" y="435.30" font-size="13.60" textLength="9.56" lengthAdjust="spacingAndGlyphs" fill="#00b050" stroke="#00b050" stroke-width="0.2">is</text>
<text x="442.71" y="435.30" font-size="13.60" textLength="20.80" lengthAdjust="spacingAndGlyphs" fill="#00b050" stroke="#00b050" stroke-width="0.2">not</text>
<text x="466.66" y="435.30" font-size="13.60" textLength="47.85" lengthAdjust="spacingAndGlyphs" fill="#00b050" stroke="#00b050" stroke-width="0.2">married</text>
<text x="517.27" y="435.30" font-size="13.60" textLength="13.38" lengthAdjust="spacingAndGlyphs" fill="#00b050" stroke="#00b050" stroke-width="0.2">or</text>
<text x="533.93" y="435.30" font-size="13.60" textLength="20.28" lengthAdjust="spacingAndGlyphs" fill="#00b050" stroke="#00b050" stroke-width="0.2">has</text>
<text x="557.24" y="435.30" font-size="13.60" textLength="15.46" lengthAdjust="spacingAndGlyphs" fill="#00b050" stroke="#00b050" stroke-width="0.2">18</text>
<text x="576.07" y="435.30" font-size="13.60" textLength="31.40" lengthAdjust="spacingAndGlyphs" fill="#00b050" stroke="#00b050" stroke-width="0.2">years</text>
<text x="610.60" y="435.30" font-size="13.60" textLength="12.63" lengthAdjust="spacingAndGlyphs" fill="#00b050" stroke="#00b050" stroke-width="0.2">or</text>
<text x="626.77" y="435.30" font-size="13.60" textLength="25.47" lengthAdjust="spacingAndGlyphs" fill="#00b050" stroke="#00b050" stroke-width="0.2">less.</text>
<text x="652.66" y="435.30" font-size="13.60" textLength="6.18" lengthAdjust="spacingAndGlyphs" fill="#000000">"</text>
<text x="183.67" y="454.50" font-size="13.60" textLength="5.26" lengthAdjust="spacingAndGlyphs" fill="#000000">"</text>
<text x="189.22" y="454.50" font-size="13.60" textLength="23.84" lengthAdjust="spacingAndGlyphs" fill="#0070c0" stroke="#0070c0" stroke-width="0.2">This</text>
<text x="216.10" y="454.50" font-size="13.60" textLength="46.61" lengthAdjust="spacingAndGlyphs" fill="#0070c0" stroke="#0070c0" stroke-width="0.2">content</text>
<text x="266.50" y="454.50" font-size="13.60" textLength="8.63" lengthAdjust="spacingAndGlyphs" fill="#0070c0" stroke="#0070c0" stroke-width="0.2">is</text>
<text x="278.85" y="454.50" font-size="13.60" textLength="36.73" lengthAdjust="spacingAndGlyphs" fill="#0070c0" stroke="#0070c0" stroke-width="0.2">visible</text>
<text x="318.96" y="454.50" font-size="13.60" textLength="13.10" lengthAdjust="spacingAndGlyphs" fill="#0070c0" stroke="#0070c0" stroke-width="0.2">to</text>
<text x="335.39" y="454.50" font-size="13.60" textLength="19.22" lengthAdjust="spacingAndGlyphs" fill="#0070c0" stroke="#0070c0" stroke-width="0.2">the</text>
<text x="358.01" y="454.50" font-size="13.60" textLength="42.08" lengthAdjust="spacingAndGlyphs" fill="#0070c0" stroke="#0070c0" stroke-width="0.2">person</text>
<text x="403.18" y="454.50" font-size="13.60" textLength="24.02" lengthAdjust="spacingAndGlyphs" fill="#0070c0" stroke="#0070c0" stroke-width="0.2">that</text>
<text x="430.71" y="454.50" font-size="13.60" textLength="9.56" lengthAdjust="spacingAndGlyphs" fill="#0070c0" stroke="#0070c0" stroke-width="0.2">is</text>
<text x="442.76" y="454.50" font-size="13.60" textLength="47.85" lengthAdjust="spacingAndGlyphs" fill="#0070c0" stroke="#0070c0" stroke-width="0.2">married</text>
<text x="493.85" y="454.50" font-size="13.60" textLength="21.69" lengthAdjust="spacingAndGlyphs" fill="#0070c0" stroke="#0070c0" stroke-width="0.2">and</text>
<text x="519.18" y="454.50" font-size="13.60" textLength="21.29" lengthAdjust="spacingAndGlyphs" fill="#0070c0" stroke="#0070c0" stroke-width="0.2">has</text>
<text x="543.27" y="454.50" font-size="13.60" textLength="32.06" lengthAdjust="spacingAndGlyphs" fill="#0070c0" stroke="#0070c0" stroke-width="0.2">more</text>
<text x="579.19" y="454.50" font-size="13.60" textLength="27.22" lengthAdjust="spacingAndGlyphs" fill="#0070c0" stroke="#0070c0" stroke-width="0.2">than</text>
<text x="608.63" y="454.50" font-size="13.60" textLength="15.69" lengthAdjust="spacingAndGlyphs" fill="#0070c0" stroke="#0070c0" stroke-width="0.2">18</text>
<text x="627.97" y="454.50" font-size="13.60" textLength="35.42" lengthAdjust="spacingAndGlyphs" fill="#0070c0" stroke="#0070c0" stroke-width="0.2">years.</text>
<text x="663.40" y="454.50" font-size="13.60" textLength="5.00" lengthAdjust="spacingAndGlyphs" fill="#000000">"</text>
<text x="672.27" y="452.50" font-size="13.50" textLength="4.69" lengthAdjust="spacingAndGlyphs" fill="#000000" stroke="#000000" stroke-width="0.15">}</text>
<text x="275.79" y="92.80" font-size="9.80" textLength="5.16" lengthAdjust="spacingAndGlyphs" fill="#444" stroke="#444" stroke-width="0.3">1</text>
<text x="372.06" y="92.80" font-size="9.80" textLength="4.88" lengthAdjust="spacingAndGlyphs" fill="#444" stroke="#444" stroke-width="0.3">2</text>
<text x="468.18" y="92.80" font-size="9.80" textLength="4.69" lengthAdjust="spacingAndGlyphs" fill="#444" stroke="#444" stroke-width="0.3">3</text>
<text x="564.32" y="92.80" font-size="9.80" textLength="4.41" lengthAdjust="spacingAndGlyphs" fill="#444" stroke="#444" stroke-width="0.3">4</text>
<text x="660.16" y="92.80" font-size="9.80" textLength="4.69" lengthAdjust="spacingAndGlyphs" fill="#444" stroke="#444" stroke-width="0.3">5</text>
<text x="756.06" y="92.80" font-size="9.80" textLength="4.82" lengthAdjust="spacingAndGlyphs" fill="#444" stroke="#444" stroke-width="0.3">6</text>
</svg>
</body></html>
